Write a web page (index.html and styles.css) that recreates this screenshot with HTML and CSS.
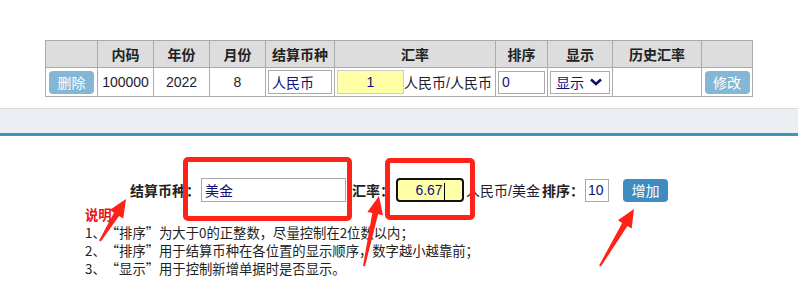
FILE: index.html
```html
<!DOCTYPE html>
<html lang="zh-CN">
<head>
    <meta charset="UTF-8">
    <title>结算币种</title>
    <link rel="stylesheet" href="styles.css">
</head>
<body>
    <div class="page">
        <table class="grid">
            <thead>
                <tr>
                    <th class="c-op"></th>
                    <th class="c-code">内码</th>
                    <th class="c-year">年份</th>
                    <th class="c-month">月份</th>
                    <th class="c-cur">结算币种</th>
                    <th class="c-rate">汇率</th>
                    <th class="c-sort">排序</th>
                    <th class="c-show">显示</th>
                    <th class="c-hist">历史汇率</th>
                    <th class="c-op2"></th>
                </tr>
            </thead>
            <tbody>
                <tr>
                    <td><button class="btn btn-light">删除</button></td>
                    <td>100000</td>
                    <td>2022</td>
                    <td>8</td>
                    <td><input class="txt txt-cur" type="text" value="人民币"></td>
                    <td class="rate-cell"><input class="txt txt-rate" type="text" value="1"><span>人民币/人民币</span></td>
                    <td><input class="txt txt-sort" type="text" value="0"></td>
                    <td>
                        <div class="fake-select">显示
                            <svg width="14" height="10" viewBox="0 0 14 10"><path d="M2 2.5 L7 7 L12 2.5" fill="none" stroke="#10106a" stroke-width="2.6"/></svg>
                        </div>
                    </td>
                    <td></td>
                    <td><button class="btn btn-light">修改</button></td>
                </tr>
            </tbody>
        </table>

        <div class="band"></div>

        <div class="add-row">
            <label class="lbl lbl-name">结算币种：</label>
            <input class="txt txt-name" type="text" value="美金">
            <label class="lbl lbl-rate">汇率：</label>
            <div class="rate-focus">6.67<span class="caret"></span></div>
            <span class="unit">人民币/美金</span>
            <label class="lbl lbl-sort">排序：</label>
            <input class="txt txt-num" type="text" value="10">
            <button class="btn btn-add">增加</button>
        </div>

        <div class="notes">
            <div class="notes-title">说明</div>
            <p>1、<span class="q-open">“</span>排序<span class="q-close">”</span>为大于0的正整数，尽量控制在2位数以内；</p>
            <p>2、<span class="q-open">“</span>排序<span class="q-close">”</span>用于结算币种在各位置的显示顺序，数字越小越靠前；</p>
            <p>3、<span class="q-open">“</span>显示<span class="q-close">”</span>用于控制新增单据时是否显示。</p>
        </div>

        <div class="mark mark-name"></div>
        <div class="mark mark-rate"></div>
        <svg class="arrows" width="798" height="288" viewBox="0 0 798 288">
            <polygon points="100.85,241.5 119.05,215.9 123.3,218.5 126,199 109.7,210.1 113.95,212.7 99.15,240.5"/>
            <polygon points="365,266.2 378.1,214.2 383,215.3 379,196 367.4,211.9 372.3,213 363,265.8"/>
            <polygon points="600.9,266.5 627.4,225.9 631.7,228.5 634,209 617.9,220.3 622.2,222.9 599.1,265.5"/>
        </svg>
    </div>
</body>
</html>
```

FILE: styles.css
```css
body {
    margin: 0;
    font-family: "Liberation Sans", "Noto Sans CJK SC", sans-serif;
    font-size: 14px;
    color: #1c1c2c;
    background: #fff;
}
.page {
    position: relative;
    width: 798px;
    height: 288px;
    overflow: hidden;
    padding-top: 40px;
    box-sizing: border-box;
}
.grid {
    border-collapse: collapse;
    margin: 0 auto;
    width: 707px;
    table-layout: fixed;
}
.grid th, .grid td {
    border: 1px solid #aaa;
    text-align: center;
    padding: 0;
    white-space: nowrap;
}
.grid th {
    background: #dddddd;
    height: 26px;
    font-weight: bold;
    color: #222;
}
.grid td {
    height: 28px;
}
.c-op { width: 51px; }
.c-code, .c-year, .c-month { width: 55px; }
.c-cur { width: 68px; }
.c-rate { width: 160px; }
.c-sort { width: 51px; }
.c-show { width: 64px; }
.c-hist { width: 88px; }
.c-op2 { width: 50px; }
.btn {
    font-family: "Noto Sans CJK SC", sans-serif;
    font-size: 14px;
    border: none;
    border-radius: 4px;
    color: #fff;
    padding: 0;
    cursor: pointer;
}
.btn-light {
    background: #83b7d6;
    width: 45px;
    height: 23px;
    line-height: 23px;
    vertical-align: middle;
}
.txt {
    box-sizing: border-box;
    border: 1px solid #aaa;
    height: 24px;
    padding: 0 3px;
    margin: 0;
    font-family: "Liberation Sans", "Noto Sans CJK SC", sans-serif;
    font-size: 14px;
    color: #10107a;
    background: #fff;
    vertical-align: middle;
}
.txt-cur { width: 64px; }
.rate-cell {
    text-align: left !important;
    padding-left: 2px !important;
}
.rate-cell span {
    vertical-align: middle;
}
.txt-rate {
    width: 67px;
    background: #ffffa8;
    text-align: center;
    border-color: #ccc;
}
.txt-sort { width: 47px; height: 23px; }
.fake-select {
    display: inline-flex;
    align-items: center;
    gap: 5px;
    box-sizing: border-box;
    width: 60px;
    height: 23px;
    border: 1px solid #aaa;
    padding-left: 5px;
    color: #10107a;
    vertical-align: middle;
}
.band {
    margin-top: 11px;
    height: 24px;
    background: #ebeef3;
    border-top: 1px solid #d8d8d8;
    border-bottom: 3px solid #4292b9;
}
.add-row {
    display: flex;
    align-items: center;
    justify-content: center;
    margin-top: 42px;
    height: 24px;
}
.lbl {
    font-weight: bold;
    color: #222;
    white-space: nowrap;
}
.lbl-name { width: 70px; }
.lbl-rate { width: 42px; margin-left: 6px; }
.lbl-sort { width: 42px; margin-left: 1px; }
.txt-name {
    width: 145px;
    margin-left: 1px;
}
.rate-focus {
    box-sizing: border-box;
    width: 68px;
    height: 24px;
    margin-left: 2px;
    border: 2px solid #111;
    border-radius: 4px;
    background: #ffffa8;
    color: #10107a;
    text-align: center;
    line-height: 20px;
}
.caret {
    display: inline-block;
    width: 1px;
    height: 17px;
    background: #000;
    vertical-align: middle;
    margin-left: 1px;
}
.unit {
    width: 75px;
    margin-left: 2px;
    white-space: nowrap;
}
.txt-num {
    width: 24px;
    height: 23px;
    margin: 0 14px 0 1px;
    padding: 0 2px;
}
.btn-add {
    background: #3f8dc0;
    width: 45px;
    height: 23px;
}
.notes {
    margin: 4px 0 0 85px;
    font-family: "Noto Sans CJK SC", sans-serif;
    font-size: 13.33px;
    line-height: 18px;
    color: #222;
}
.notes-title {
    color: #ee1111;
    font-weight: bold;
    line-height: 18px;
}
.notes p {
    margin: 0;
}
.q-open, .q-close {
    display: inline-block;
    width: 1em;
}
.q-open { text-align: right; }
.q-close { text-align: left; }
.mark {
    position: absolute;
    border: 5px solid #ff2218;
    border-radius: 5px;
    box-sizing: border-box;
}
.mark-name {
    left: 183px;
    top: 157px;
    width: 169px;
    height: 64px;
}
.mark-rate {
    left: 385px;
    top: 158px;
    width: 90px;
    height: 62px;
}
.arrows {
    position: absolute;
    top: 0;
    left: 0;
    pointer-events: none;
}
.arrows polygon {
    fill: #ff2218;
}
```
